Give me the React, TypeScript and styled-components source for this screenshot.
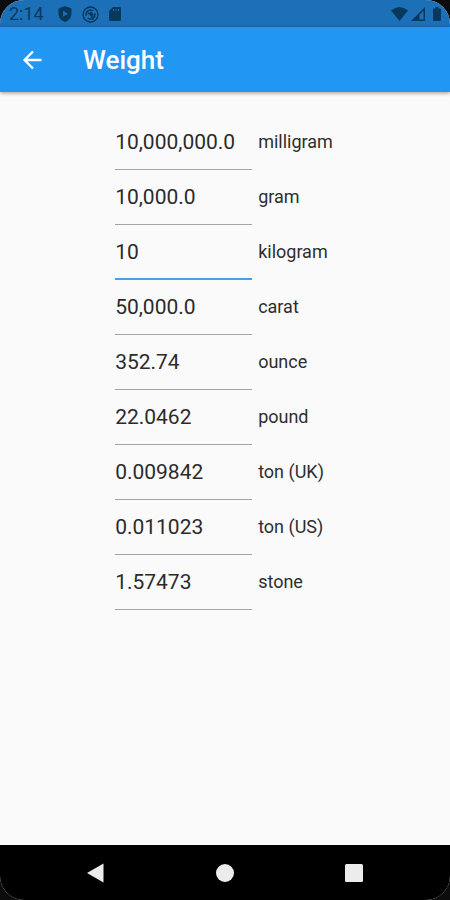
import React, { useState } from "react";
import styled, { createGlobalStyle } from "styled-components";

const GlobalStyle = createGlobalStyle`
  *, *::before, *::after { box-sizing: border-box; }
  body {
    margin: 0;
    background: #0c0c0c;
    font-family: Roboto, "Liberation Sans", sans-serif;
  }
`;

const Screen = styled.div`
  display: flex;
  flex-direction: column;
  min-height: 100vh;
  border-radius: 24px;
  overflow: hidden;
  background: #fafafa;
`;

const StatusBar = styled.div`
  display: flex;
  align-items: center;
  justify-content: space-between;
  height: 27px;
  padding: 1px 9px 0;
  background: #1c70b8;
  color: #07395f;
`;

const StatusGroup = styled.div<{ $gap: number }>`
  display: flex;
  align-items: center;
  gap: ${({ $gap }) => $gap}px;
`;

const Clock = styled.time`
  margin-right: 4px;
  font-size: 18px;
  line-height: 24px;
`;

const AppBar = styled.header`
  display: flex;
  align-items: center;
  gap: 39px;
  height: 65px;
  padding: 0 21px;
  background: #2196f3;
  color: #fff;
  box-shadow: 0 1px 4px rgba(0, 0, 0, 0.4);
`;

const IconButton = styled.button`
  display: flex;
  padding: 0;
  border: 0;
  background: none;
  color: inherit;
  cursor: pointer;
`;

const Title = styled.h1`
  margin: 0;
  font-size: 26px;
  font-weight: 500;
  line-height: 32px;
`;

const Content = styled.main`
  flex: 1;
  padding: 23px 18px 23px 16px;
`;

const UnitForm = styled.form`
  display: grid;
  grid-template-columns: 137px auto;
  justify-content: center;
  column-gap: 6px;
`;

const ValueInput = styled.input<{ $active: boolean }>`
  width: 100%;
  height: 55px;
  padding: ${({ $active }) => ($active ? "1px 0 0" : "0")};
  border: 0;
  border-bottom: ${({ $active }) => ($active ? "2px solid #4a9cf0" : "1px solid #a4a4a4")};
  border-radius: 0;
  outline: 0;
  background: transparent;
  color: #2b2b2b;
  font-family: inherit;
  font-size: 21px;
`;

const UnitLabel = styled.label`
  align-self: center;
  padding-bottom: 2px;
  color: #2e2e2e;
  font-size: 18px;
  line-height: 24px;
`;

const NavBar = styled.nav`
  display: flex;
  align-items: center;
  justify-content: space-around;
  height: 55px;
  padding: 0 31px;
  background: #000;
  color: #ececec;
`;

const units = [
  { name: "milligram", value: "10,000,000.0" },
  { name: "gram", value: "10,000.0" },
  { name: "kilogram", value: "10" },
  { name: "carat", value: "50,000.0" },
  { name: "ounce", value: "352.74" },
  { name: "pound", value: "22.0462" },
  { name: "ton (UK)", value: "0.009842" },
  { name: "ton (US)", value: "0.011023" },
  { name: "stone", value: "1.57473" },
];

const ShieldIcon = () => (
  <svg width="14" height="16" viewBox="0 0 14 16" aria-hidden="true">
    <path
      fill="currentColor"
      fillRule="evenodd"
      d="M7 0 13.5 2.5V7.5C13.5 11.5 10.8 14.8 7 16 3.2 14.8.5 11.5.5 7.5V2.5ZM5 4.7V10.700L10 7.700Z"
    />
  </svg>
);

const SyncIcon = () => (
  <svg width="17" height="17" viewBox="0 0 17 17" fill="none" stroke="currentColor" strokeWidth="1.400" aria-hidden="true">
    <circle cx="8.500" cy="8.500" r="7.500" />
    <path d="M4.300 9.800A4.400 4.400 0 0 1 11.200 5M12.700 7.200A4.400 4.400 0 0 1 5.800 12" />
    <path d="M4.800 6.500 8 6.500 12.300 10.800 9.500 10.800Z" fill="currentColor" stroke="none" />
    <path d="M8.500 6 11.500 9M9 11.500 11.500 13.500" />
  </svg>
);

const SdCardIcon = () => (
  <svg width="12" height="14" viewBox="0 0 12 14" aria-hidden="true">
    <path
      fill="currentColor"
      fillRule="evenodd"
      d="M4 0H10.700Q12 0 12 1.300V12.700Q12 14 10.700 14H1.300Q0 14 0 12.700V4ZM4 2V4H5V2ZM6.500 2V4H7.500V2ZM9 2V4H10V2Z"
    />
  </svg>
);

const WifiIcon = () => (
  <svg width="17" height="14" viewBox="0 0 17 14" aria-hidden="true">
    <path fill="currentColor" d="M0 3.500Q8.500-3.500 17 3.500L8.500 14Z" />
  </svg>
);

const SignalIcon = () => (
  <svg width="14" height="14" viewBox="0 0 14 14" aria-hidden="true">
    <path fill="currentColor" fillRule="evenodd" d="M14 0V14H0ZM12.500 3.700 8.500 7.700V12.500H12.500Z" />
  </svg>
);

const BatteryIcon = () => (
  <svg width="8" height="14" viewBox="0 0 8 14" aria-hidden="true">
    <path fill="currentColor" d="M2.500 0H5.500V1.500H7Q8 1.500 8 2.500V13Q8 14 7 14H1Q0 14 0 13V2.500Q0 1.500 1 1.500H2.500Z" />
  </svg>
);

const ArrowIcon = () => (
  <svg width="23" height="22" viewBox="0 0 23 22" fill="none" stroke="currentColor" strokeWidth="2.300" aria-hidden="true">
    <path d="M20.500 11H3.500M12 2.500 3.500 11 12 19.500" />
  </svg>
);

const NavIcon = ({ children }: { children: React.ReactNode }) => (
  <svg width="20" height="20" viewBox="0 0 20 20" fill="currentColor" aria-hidden="true">
    {children}
  </svg>
);

export default function App() {
  const [values, setValues] = useState(units.map((unit) => unit.value));
  const [active, setActive] = useState(2);

  const update = (index: number, value: string) =>
    setValues((current) => current.map((item, i) => (i === index ? value : item)));

  return (
    <>
      <GlobalStyle />
      <Screen>
        <StatusBar>
          <StatusGroup $gap={10}>
            <Clock>2:14</Clock>
            <ShieldIcon />
            <SyncIcon />
            <SdCardIcon />
          </StatusGroup>
          <StatusGroup $gap={8}>
            <StatusGroup $gap={3}>
              <WifiIcon />
              <SignalIcon />
            </StatusGroup>
            <BatteryIcon />
          </StatusGroup>
        </StatusBar>
        <AppBar>
          <IconButton type="button" aria-label="Back">
            <ArrowIcon />
          </IconButton>
          <Title>Weight</Title>
        </AppBar>
        <Content>
          <UnitForm>
            {units.map((unit, index) => (
              <React.Fragment key={unit.name}>
                <ValueInput
                  id={`unit-${index}`}
                  inputMode="decimal"
                  value={values[index]}
                  $active={active === index}
                  onFocus={() => setActive(index)}
                  onChange={(event) => update(index, event.target.value)}
                />
                <UnitLabel htmlFor={`unit-${index}`}>{unit.name}</UnitLabel>
              </React.Fragment>
            ))}
          </UnitForm>
        </Content>
        <NavBar>
          <IconButton type="button" aria-label="Back">
            <NavIcon>
              <path d="M17.500.5V19.500L1 10Z" />
            </NavIcon>
          </IconButton>
          <IconButton type="button" aria-label="Home">
            <NavIcon>
              <circle cx="10" cy="10" r="9" />
            </NavIcon>
          </IconButton>
          <IconButton type="button" aria-label="Recent apps">
            <NavIcon>
              <rect x="1" y="1" width="18" height="18" rx="1.500" />
            </NavIcon>
          </IconButton>
        </NavBar>
      </Screen>
    </>
  );
}
